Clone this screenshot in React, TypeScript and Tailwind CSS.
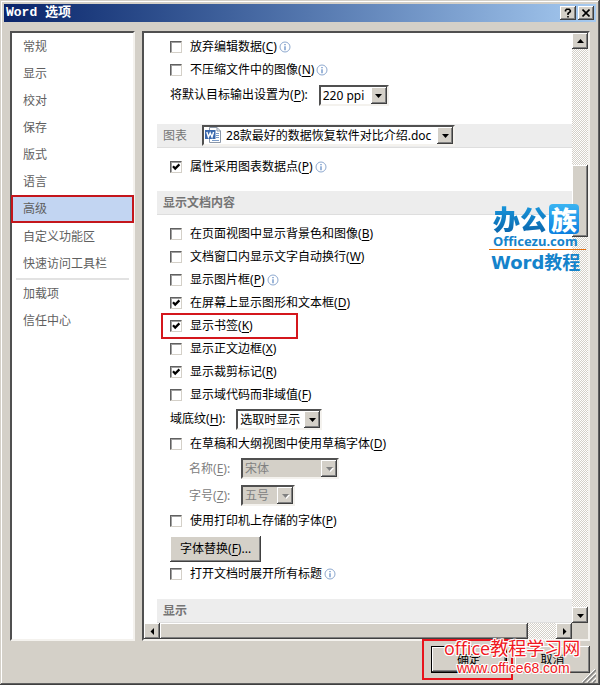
import type { ReactNode } from "react";
import clsx from "clsx";

const RAISED = "bg-[#d4d0c8] shadow-[inset_-1px_-1px_0_#404040,inset_1px_1px_0_#fff,inset_-2px_-2px_0_#808080]";
const SUNKEN = "border-2 border-t-[#505050] border-l-[#505050] border-r-[#f4f2ee] border-b-[#f4f2ee]";
const TRACK = "bg-[repeating-conic-gradient(#fff_0_25%,#d4d0c8_0_50%)] bg-[length:2px_2px]";

const NAV_ITEMS = ["常规", "显示", "校对", "保存", "版式", "语言", "高级", "自定义功能区", "快速访问工具栏"];
const NAV_EXTRA = ["加载项", "信任中心"];

type Option = { label: string; accessKey?: string; checked?: boolean; info?: boolean; marked?: boolean };

const IMAGE_OPTIONS: Option[] = [
  { label: "放弃编辑数据", accessKey: "C", info: true },
  { label: "不压缩文件中的图像", accessKey: "N", info: true },
];

const CONTENT_OPTIONS: Option[] = [
  { label: "在页面视图中显示背景色和图像", accessKey: "B" },
  { label: "文档窗口内显示文字自动换行", accessKey: "W" },
  { label: "显示图片框", accessKey: "P", info: true },
  { label: "在屏幕上显示图形和文本框", accessKey: "D", checked: true },
  { label: "显示书签", accessKey: "K", checked: true, marked: true },
  { label: "显示正文边框", accessKey: "X" },
  { label: "显示裁剪标记", accessKey: "R", checked: true },
  { label: "显示域代码而非域值", accessKey: "F" },
];

function Arrow({ dir, className = "fill-black" }: { dir: "up" | "down" | "left" | "right"; className?: string }) {
  const points = {
    up: "1,6 4.5,2 8,6",
    down: "1,3 8,3 4.5,7",
    left: "6,1 6,8 2.5,4.5",
    right: "3,1 3,8 6.5,4.5",
  }[dir];
  return (
    <svg viewBox="0 0 9 9" className={clsx("size-[9px]", className)} aria-hidden="true">
      <polygon points={points} />
    </svg>
  );
}

function InfoIcon() {
  return (
    <svg viewBox="0 0 12 12" className="ml-0.5 size-3 shrink-0" fill="none" aria-hidden="true">
      <circle cx="6" cy="6" r="5" stroke="#8ea9cf" />
      <path d="M6 3v1.2M6 5.2v4" stroke="#5b86c2" strokeWidth="1.2" />
    </svg>
  );
}

function KeyHint({ children }: { children: ReactNode }) {
  return <>(<span className="underline underline-offset-2">{children}</span>)</>;
}

function CheckRow({ label, accessKey, checked, info, marked }: Option) {
  return (
    <div className="relative flex h-[23px] items-center">
      <label className="flex items-center gap-2">
        <span className="relative size-3 shrink-0">
          <input
            type="checkbox"
            defaultChecked={checked}
            className="peer block size-3 appearance-none border border-t-[#606060] border-l-[#606060] border-r-[#d4d0c8] border-b-[#d4d0c8] bg-white shadow-[inset_1px_1px_0_#a0a0a0]"
          />
          <svg viewBox="0 0 12 12" className="pointer-events-none absolute inset-0 hidden size-3 peer-checked:block" fill="none">
            <path d="M3 5.2 5.2 7.6 9.4 3.4" stroke="#000" strokeWidth="2.2" />
          </svg>
        </span>
        <span className="whitespace-nowrap">
          {label}
          {accessKey && <KeyHint>{accessKey}</KeyHint>}
        </span>
      </label>
      {info && <InfoIcon />}
      {marked && <div className="pointer-events-none absolute -top-px -left-[9px] h-[26px] w-[137px] border-2 border-[#d4161c]" />}
    </div>
  );
}

type DropDownProps = { id: string; value: string; width: string; disabled?: boolean; label?: string; icon?: ReactNode };

function DropDown({ id, value, width, disabled, label, icon }: DropDownProps) {
  return (
    <div className={clsx("relative h-[21px] shrink-0", width)}>
      <select
        id={id}
        aria-label={label}
        disabled={disabled}
        className={clsx(
          "block size-full appearance-none pr-[18px] leading-[17px] opacity-100",
          SUNKEN,
          icon ? "pl-[22px]" : "pl-0.5",
          disabled ? "bg-[#d4d0c8] text-[#808080]" : "bg-white text-black",
        )}
      >
        <option>{value}</option>
      </select>
      {icon}
      <span className={clsx("pointer-events-none absolute inset-y-0.5 right-0.5 flex w-4 items-center justify-center", RAISED)}>
        <Arrow dir="down" className={disabled ? "fill-[#808080] drop-shadow-[1px_1px_0_#fff]" : "fill-black"} />
      </span>
    </div>
  );
}

function WordIcon() {
  return (
    <svg viewBox="0 0 16 16" className="pointer-events-none absolute top-0.5 left-[3px] size-4" aria-hidden="true">
      <path d="M4.500 .5h7.500l3.500 3.500v11.500h-11z" fill="#fff" stroke="#8b97a8" />
      <path d="M12 .5v3.500h3.500" fill="none" stroke="#8b97a8" />
      <path d="M11 6.500h3M11 8.500h3M11 10.500h3M7 13.500h7" stroke="#7d9cc7" />
      <rect x="0" y="3" width="10.500" height="9" fill="#3a68ad" />
      <path d="M1.800 5 3.400 10 5.200 6 7 10 8.600 5" fill="none" stroke="#fff" strokeWidth="1.400" />
    </svg>
  );
}

function SectionHeader({ children, className }: { children: ReactNode; className?: string }) {
  return (
    <div className={clsx("ml-[13px] flex h-6 items-center border-b border-[#dedede] bg-[#ededed] pl-1.5 text-[#757575]", className)}>
      {children}
    </div>
  );
}

function TitleBar() {
  return (
    <header className="flex h-[18px] items-center justify-between bg-linear-to-r from-[#0a246a] to-[#a6caf0] px-0.5">
      <h1 className="font-['Liberation_Mono','Noto_Sans_CJK_SC',monospace] text-[13px] leading-[18px] font-bold text-white">Word 选项</h1>
      <div className="flex gap-0.5">
        <button type="button" aria-label="帮助" className={clsx("flex h-3.5 w-4 items-center justify-center", RAISED)}>
          <svg viewBox="0 0 8 10" className="h-2.5 w-2" fill="none" stroke="#000" strokeWidth="1.600">
            <path d="M1.500 3.500V2.500L2.500 1.300H5.200L6.300 2.500V3.700L4 5.500V7M4 8v1.600" />
          </svg>
        </button>
        <button type="button" aria-label="关闭" className={clsx("flex h-3.5 w-4 items-center justify-center", RAISED)}>
          <svg viewBox="0 0 8 8" className="size-2" stroke="#000" strokeWidth="1.600">
            <path d="M.5.5l7 7M7.500.5l-7 7" />
          </svg>
        </button>
      </div>
    </header>
  );
}

function NavLink({ name, active }: { name: string; active?: boolean }) {
  return (
    <a
      href="#"
      aria-current={active ? "page" : undefined}
      className={clsx(
        "flex items-center",
        active ? "-mx-px h-7 border-2 border-[#c4161c] bg-[#c2d5f2] pl-2.5" : "h-[27px] pl-[11px]",
      )}
    >
      {name}
    </a>
  );
}

function SideNav() {
  return (
    <nav className={clsx("w-[125px] shrink-0 bg-white text-[#5f5f5f]", SUNKEN)}>
      {NAV_ITEMS.map((name) => (
        <NavLink key={name} name={name} active={name === "高级"} />
      ))}
      <hr className="mx-1 mt-px border-t-2 border-[#e2e2e2]" />
      {NAV_EXTRA.map((name) => (
        <NavLink key={name} name={name} />
      ))}
    </nav>
  );
}

function ScrollButton({ dir, label }: { dir: "up" | "down" | "left" | "right"; label: string }) {
  return (
    <button type="button" aria-label={label} className={clsx("flex size-4 shrink-0 items-center justify-center", RAISED)}>
      <Arrow dir={dir} />
    </button>
  );
}

function OptionsPane() {
  return (
    <div className="min-w-0 flex-1 overflow-hidden bg-white pt-0.5">
      <div className="pl-[26px]">
        {IMAGE_OPTIONS.map((o) => (
          <CheckRow key={o.label} {...o} />
        ))}
        <div className="flex h-7 items-center gap-[11px]">
          <label htmlFor="ppi">将默认目标输出设置为<KeyHint>P</KeyHint>:</label>
          <DropDown id="ppi" value="220 ppi" width="w-[70px]" />
        </div>
      </div>

      <SectionHeader className="mt-[15px] gap-[15px]">
        <h2>图表</h2>
        <DropDown id="chart-doc" label="图表" value="28款最好的数据恢复软件对比介绍.doc" width="w-[253px]" icon={<WordIcon />} />
      </SectionHeader>
      <div className="pt-[7px] pl-[26px]">
        <CheckRow label="属性采用图表数据点" accessKey="P" checked info />
      </div>

      <SectionHeader className="mt-[13px]">
        <h2 className="font-bold">显示文档内容</h2>
      </SectionHeader>
      <div className="pt-[7px] pl-[26px]">
        {CONTENT_OPTIONS.map((o) => (
          <CheckRow key={o.label} {...o} />
        ))}
        <div className="flex h-[26px] items-center gap-[11px]">
          <label htmlFor="shading">域底纹<KeyHint>H</KeyHint>:</label>
          <DropDown id="shading" value="选取时显示" width="w-[86px]" />
        </div>
        <CheckRow label="在草稿和大纲视图中使用草稿字体" accessKey="D" />
        <div className="pl-[19px] text-[#808080]">
          <div className="flex h-[27px] items-center">
            <label htmlFor="font-name" className="w-[52px]">名称<KeyHint>E</KeyHint>:</label>
            <DropDown id="font-name" value="宋体" width="w-[98px]" disabled />
          </div>
          <div className="flex h-[27px] items-center">
            <label htmlFor="font-size" className="w-[52px]">字号<KeyHint>Z</KeyHint>:</label>
            <DropDown id="font-size" value="五号" width="w-[54px]" disabled />
          </div>
        </div>
        <CheckRow label="使用打印机上存储的字体" accessKey="P" />
        <button type="button" className={clsx("mt-1 block h-[26px] px-2.5", RAISED)}>
          字体替换<KeyHint>F</KeyHint>...
        </button>
        <CheckRow label="打开文档时展开所有标题" info />
      </div>

      <SectionHeader className="mt-3.5">
        <h2 className="font-bold">显示</h2>
      </SectionHeader>
    </div>
  );
}

function SiteLogo() {
  return (
    <div className="pointer-events-none absolute top-[203px] right-3.5 w-[97px] font-['Noto_Sans_CJK_SC',sans-serif] font-black text-[#1583cb]">
      <div className="flex h-8 items-center gap-0.5 pl-1 text-[27px] leading-8">
        <span className="bg-linear-to-b from-[#1a9ae0] to-[#0a64aa] bg-clip-text text-transparent">办公</span>
        <span className="flex size-[30px] items-center justify-center rounded-sm bg-linear-to-b from-[#3ab4f2] to-[#0a7fe0] text-[26px] text-white">族</span>
      </div>
      <div className="pl-1 font-['Noto_Sans',sans-serif] text-[13px] leading-[13px] font-bold">Officezu.com</div>
      <hr className="mt-px border-t border-[#e8700a]" />
      <div className="pl-0.5 font-['DejaVu_Sans','Noto_Sans_CJK_SC',sans-serif] text-lg leading-[26px] font-bold whitespace-nowrap">Word教程</div>
    </div>
  );
}

function Footer() {
  return (
    <footer className="relative flex h-[42px] items-start justify-end gap-2 pt-[5px] pr-1.5">
      <button type="button" className={clsx("h-[27px] w-[76px] border border-black", RAISED)}>确定</button>
      <button type="button" className={clsx("h-[27px] w-[75px]", RAISED)}>取消</button>
      <div className="pointer-events-none absolute -top-0.5 right-[83px] h-[41px] w-[91px] border-2 border-[#e8141c]" />
      <div className="pointer-events-none absolute -top-1 right-2.5 w-[142px] whitespace-nowrap text-[#f01822] [text-shadow:1px_0_#fff,-1px_0_#fff,0_1px_#fff,0_-1px_#fff,1px_1px_#fff,-1px_-1px_#fff,1px_-1px_#fff,-1px_1px_#fff]">
        <div className="font-['Open_Sans','Noto_Sans_CJK_SC',sans-serif] text-lg leading-[22px]">office教程学习网</div>
        <div className="pl-[13px] font-['Liberation_Sans',sans-serif] text-sm leading-[18px]">www.office68.com</div>
      </div>
      <svg viewBox="0 0 14 14" className="absolute right-0 bottom-0 size-3.5" aria-hidden="true">
        <path d="M1 14 14 1M6 14l8-8M11 14l3-3" stroke="#808080" strokeWidth="1.500" />
        <path d="M0 13 13 0M5 13l9-9M10 13l4-4" stroke="#fff" />
      </svg>
    </footer>
  );
}

export default function App() {
  return (
    <div className="relative flex min-h-screen flex-col bg-[#d4d0c8] p-1 pb-0.5 font-['Noto_Sans','Noto_Sans_CJK_SC',sans-serif] text-xs text-black shadow-[inset_-1px_-1px_0_#404040,inset_1px_1px_0_#d4d0c8,inset_-2px_-2px_0_#606060,inset_2px_2px_0_#fff]">
      <TitleBar />
      <main className="mt-[9px] flex flex-1 gap-[7px] px-1.5">
        <SideNav />
        <section className={clsx("flex min-w-0 flex-1 flex-col", SUNKEN)}>
          <div className="flex flex-1">
            <OptionsPane />
            <div className={clsx("flex w-4 shrink-0 flex-col", TRACK)}>
              <ScrollButton dir="up" label="向上滚动" />
              <div className="h-[116px]" />
              <div className={clsx("h-[72px]", RAISED)} />
              <div className="flex-1" />
              <ScrollButton dir="down" label="向下滚动" />
            </div>
          </div>
          <div className="flex h-4 bg-[#d4d0c8] pr-4">
            <ScrollButton dir="left" label="向左滚动" />
            <div className={clsx("flex flex-1", TRACK)}>
              <div className={clsx("w-[93%]", RAISED)} />
            </div>
            <ScrollButton dir="right" label="向右滚动" />
          </div>
        </section>
      </main>
      <Footer />
      <SiteLogo />
    </div>
  );
}
